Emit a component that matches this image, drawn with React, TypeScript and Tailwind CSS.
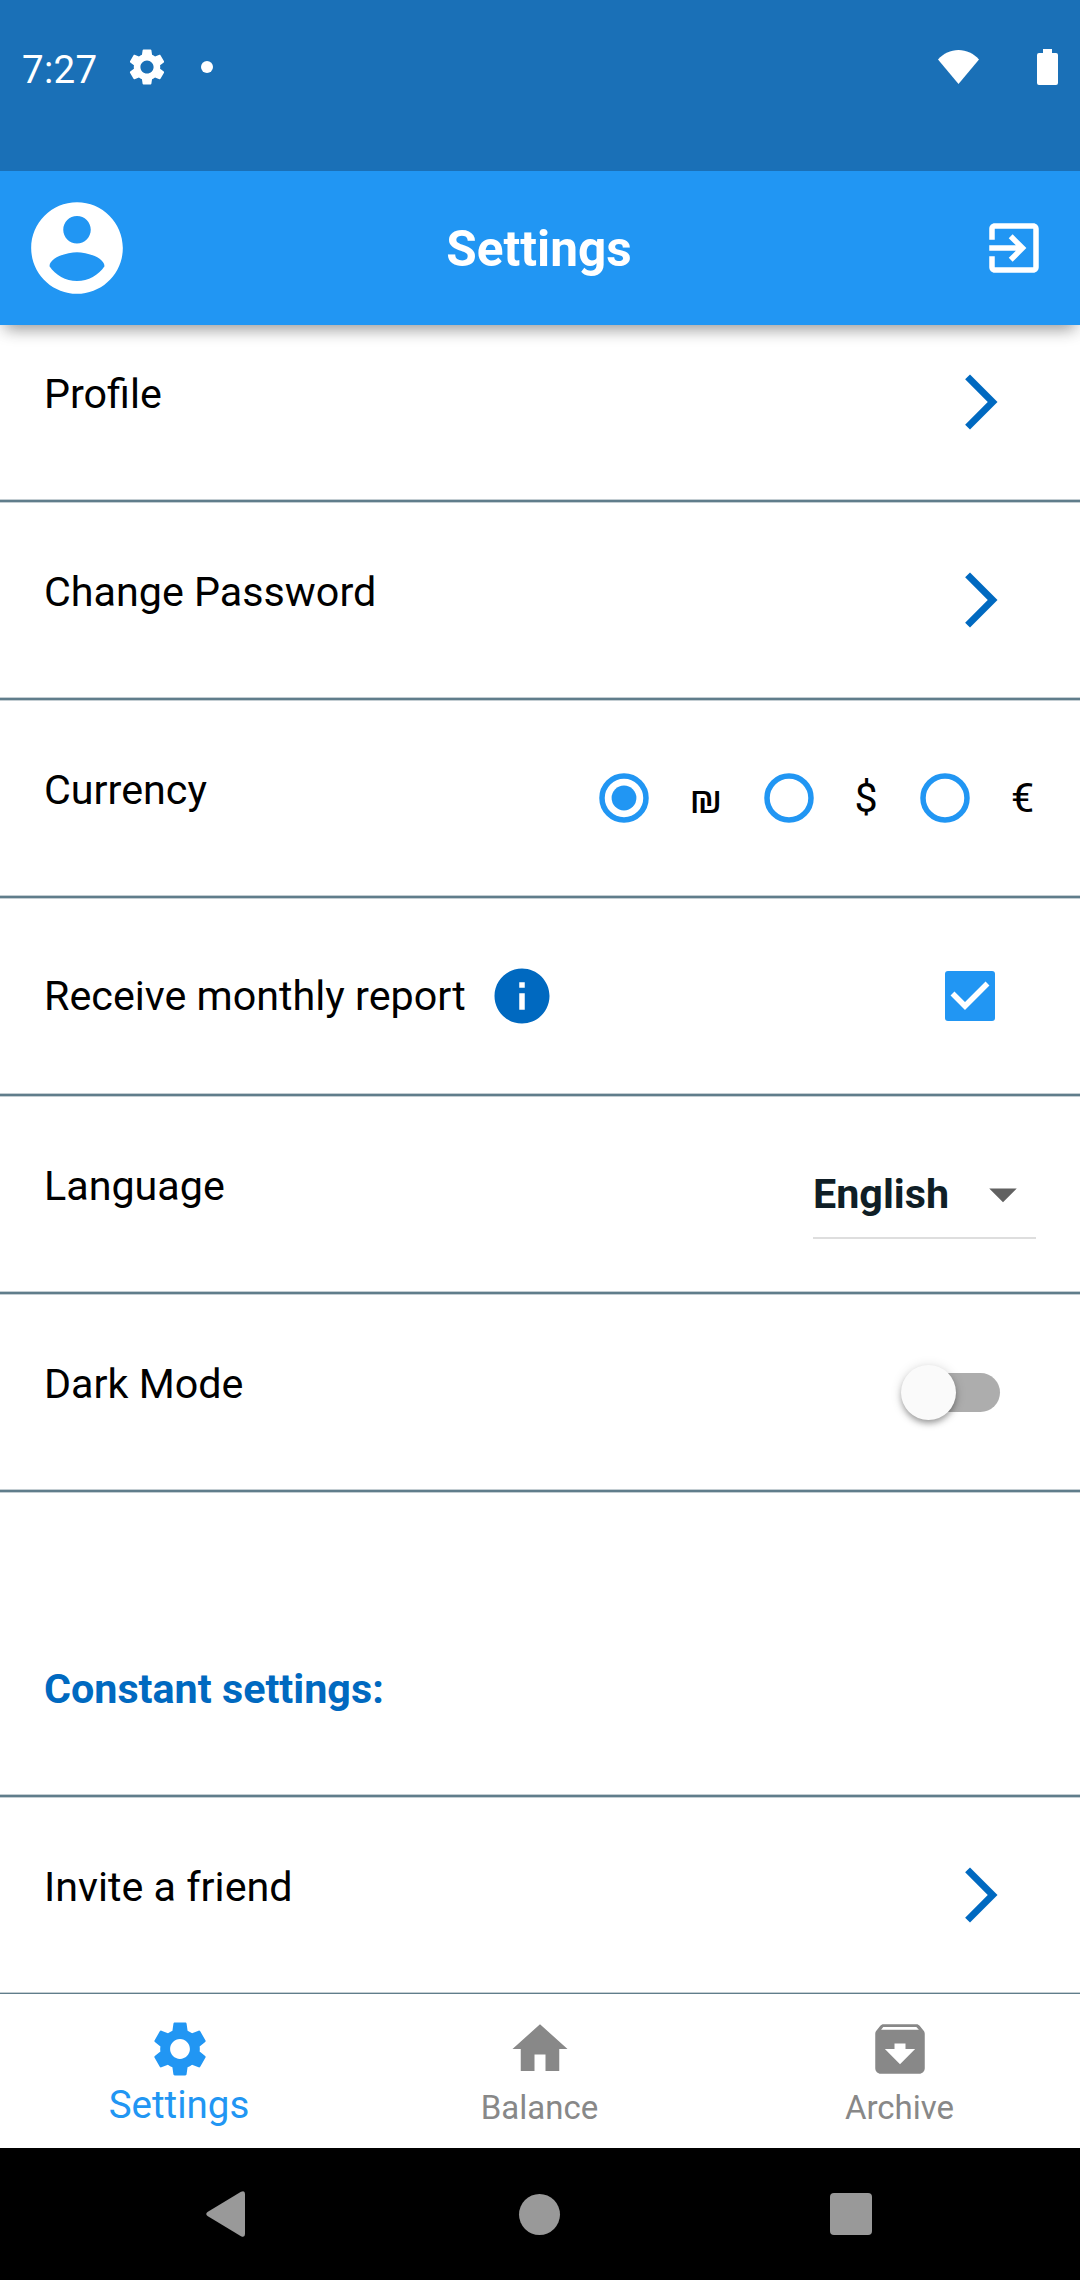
import type { ReactNode } from "react";

const PATHS = {
  settings:
    "M19.14,12.94c0.04-0.3,0.06-0.61,0.06-0.94c0-0.32-0.02-0.64-0.07-0.94l2.03-1.58c0.18-0.14,0.23-0.41,0.12-0.61l-1.92-3.32c-0.12-0.22-0.37-0.29-0.59-0.22l-2.39,0.96c-0.5-0.38-1.03-0.7-1.62-0.94L14.4,2.81c-0.04-0.24-0.24-0.41-0.48-0.41h-3.84c-0.24,0-0.43,0.17-0.47,0.41L9.25,5.35C8.66,5.59,8.12,5.92,7.63,6.29L5.24,5.33c-0.22-0.08-0.47,0-0.59,0.22L2.74,8.87C2.62,9.08,2.66,9.34,2.86,9.48l2.03,1.58C4.84,11.36,4.8,11.69,4.8,12s0.02,0.64,0.07,0.94l-2.03,1.58c-0.18,0.14-0.23,0.41-0.12,0.61l1.92,3.32c0.12,0.22,0.37,0.29,0.59,0.22l2.39-0.96c0.5,0.38,1.03,0.7,1.62,0.94l0.36,2.54c0.05,0.24,0.24,0.41,0.48,0.41h3.84c0.24,0,0.44-0.17,0.47-0.41l0.36-2.54c0.59-0.24,1.13-0.56,1.62-0.94l2.39,0.96c0.22,0.08,0.47,0,0.59-0.22l1.92-3.32c0.12-0.22,0.07-0.47-0.12-0.61L19.14,12.94z M12,15.6c-1.98,0-3.6-1.62-3.6-3.6s1.62-3.6,3.6-3.6s3.6,1.62,3.6,3.6S13.98,15.6,12,15.6z",
  account:
    "M12 2C6.48 2 2 6.48 2 12s4.48 10 10 10 10-4.48 10-10S17.52 2 12 2zm0 3c1.66 0 3 1.34 3 3s-1.34 3-3 3-3-1.34-3-3 1.34-3 3-3zm0 14.2c-2.5 0-4.71-1.28-6-3.22.03-1.99 4-3.08 6-3.08 1.99 0 5.97 1.09 6 3.08-1.29 1.94-3.5 3.22-6 3.22z",
  exit: "M10.09 15.59 11.5 17l5-5-5-5-1.41 1.41L12.67 11H3v2h9.67zM19 3H5c-1.11 0-2 .9-2 2v4h2V5h14v14H5v-4H3v4c0 1.1.89 2 2 2h14c1.1 0 2-.9 2-2V5c0-1.1-.9-2-2-2z",
  chevron: "M6.23 20.23 8 22l10-10L8 2 6.23 3.77 14.46 12z",
  info: "M12 2C6.48 2 2 6.48 2 12s4.48 10 10 10 10-4.48 10-10S17.52 2 12 2zm1 15h-2v-6h2v6zm0-8h-2V7h2v2z",
  dropdown: "M7 10l5 5 5-5z",
  home: "M10 20v-6h4v6h5v-8h3L12 3 2 12h3v8z",
  archive:
    "M20.54 5.23l-1.39-1.68C18.88 3.21 18.47 3 18 3H6c-.47 0-.88.21-1.16.55L3.46 5.23C3.17 5.57 3 6.02 3 6.5V19c0 1.1.9 2 2 2h14c1.1 0 2-.9 2-2V6.5c0-.48-.17-.93-.46-1.27zM12 17.5L6.5 12H10v-2h4v2h3.5L12 17.5zM5.12 5l.81-1h12l.94 1H5.12z",
};

function Icon({ name, className }: { name: keyof typeof PATHS; className: string }) {
  return (
    <svg viewBox="0 0 24 24" fill="currentColor" className={`shrink-0 ${className}`}>
      <path d={PATHS[name]} />
    </svg>
  );
}

function Divider() {
  return <div className="h-1 shrink-0 border-y border-[#c4ced3] bg-[#607d8b]" />;
}

function Row({ label, children }: { label: string; children?: ReactNode }) {
  return (
    <>
      <div className="flex h-[194px] shrink-0 items-center justify-between px-11">
        <span className="pb-4">{label}</span>
        {children}
      </div>
      <Divider />
    </>
  );
}

function Chevron() {
  return <Icon name="chevron" className="mr-[22px] size-[66px] text-[#0069c0]" />;
}

function Radio({ checked }: { checked?: boolean }) {
  return (
    <span className="flex w-[132px] justify-center">
      <svg viewBox="0 0 50 50" className="size-[50px] text-[#2196f3]">
        <circle cx="25" cy="25" r="22" fill="none" stroke="currentColor" strokeWidth="5.5" />
        {checked && <circle cx="25" cy="25" r="12.4" fill="currentColor" />}
      </svg>
    </span>
  );
}

function StatusBar() {
  return (
    <div className="z-20 h-[171px] shrink-0 bg-[#1a70b7] text-white">
      <div className="flex h-[134px] items-center pl-[22px] pr-[22px]">
        <span className="w-[102.5px] pt-[6px] text-[38.5px] leading-[46px] tracking-[0.3px]">7:27</span>
        <Icon name="settings" className="size-[44px]" />
        <span className="ml-[32.5px] size-3 rounded-full bg-white" />
        <svg viewBox="0 0 41 34" className="ml-auto h-[34px] w-[41px]" fill="white">
          <path d="M0 9.5C5.5 3.5 12.500 0 20.500 0S35.500 3.500 41 9.500L20.500 34z" />
        </svg>
        <svg viewBox="0 0 21 36" className="ml-[58px] h-[36px] w-[21px]" fill="white">
          <path d="M6 0h9v4h4a2 2 0 0 1 2 2v28a2 2 0 0 1-2 2H2a2 2 0 0 1-2-2V6a2 2 0 0 1 2-2h4z" />
        </svg>
      </div>
    </div>
  );
}

function AppBar() {
  return (
    <header className="z-10 grid h-[154px] shrink-0 grid-cols-[1fr_auto_1fr] items-center bg-[#2196f3] pl-[22px] pr-[33px] text-white shadow-[0_11px_14px_-7px_rgba(0,0,0,0.3),0_4px_18px_rgba(0,0,0,0.14)]">
      <Icon name="account" className="size-[110px]" />
      <h1 className="pl-[9px] pt-[2px] text-[49.5px] font-bold leading-[58px]">Settings</h1>
      <Icon name="exit" className="size-[66px] justify-self-end" />
    </header>
  );
}

function NavTab({ icon, label, active }: { icon: keyof typeof PATHS; label: string; active?: boolean }) {
  return (
    <div className={`flex flex-1 flex-col items-center pt-[22px] ${active ? "text-[#2196f3]" : "text-[#888888]"}`}>
      <Icon name={icon} className="size-[66px]" />
      <span className={active ? "pr-[2px] text-[38.5px] leading-[46px]" : "pr-[1px] text-[33px] leading-[51px]"}>
        {label}
      </span>
    </div>
  );
}

export default function App() {
  return (
    <div className="flex h-[2280px] w-[1080px] flex-col overflow-hidden bg-white font-['Roboto',sans-serif] text-[41.25px] leading-[48px] text-black">
      <StatusBar />
      <AppBar />

      <main className="flex h-[1669px] shrink-0 flex-col overflow-hidden">
        <div className="-mt-5 flex flex-col">
          <Row label="Profile">
            <Chevron />
          </Row>
          <Row label="Change Password">
            <Chevron />
          </Row>
          <Row label="Currency">
            <div className="flex items-center">
              <Radio checked />
              <span className="w-[33px] pt-[1px] text-center">₪</span>
              <Radio />
              <span className="w-[24.5px]">$</span>
              <Radio />
              <span className="w-[25px]">€</span>
            </div>
          </Row>

          <div className="flex h-[194px] items-center px-11">
            <span>Receive monthly report</span>
            <Icon name="info" className="ml-[23.5px] size-[66px] text-[#0069c0]" />
            <span className="ml-auto mr-[41px] size-[50px] rounded-[3px] bg-[#2196f3]">
              <svg viewBox="0 0 18 18" className="size-full" fill="none" stroke="white" strokeWidth="2">
                <path d="M2.700 8.100 7.200 12.600 15.300 4.500" />
              </svg>
            </span>
          </div>
          <Divider />

          <Row label="Language">
            <div className="flex h-[90px] w-[223px] items-center justify-between border-b-2 border-[#dedede] pt-[2px] font-bold text-[#0f1e26]">
              English
              <Icon name="dropdown" className="size-[66px] text-[#616161]" />
            </div>
          </Row>
          <Row label="Dark Mode">
            <div className="mr-9 flex h-[39px] w-[91px] items-center rounded-full bg-[#adadad]">
              <span className="-ml-2 size-[55px] shrink-0 rounded-full bg-[#fafafa] shadow-[0_4px_6px_-1px_rgba(0,0,0,0.35),0_1px_12px_rgba(0,0,0,0.14)]" />
            </div>
          </Row>

          <div className="mt-[107px] flex h-[194px] items-center px-11 pb-4 font-bold text-[#0069c0]">
            Constant settings:
          </div>
          <Divider />
          <Row label="Invite a friend">
            <Chevron />
          </Row>
        </div>
      </main>

      <nav className="flex h-[154px] shrink-0 bg-white">
        <NavTab icon="settings" label="Settings" active />
        <NavTab icon="home" label="Balance" />
        <NavTab icon="archive" label="Archive" />
      </nav>

      <div className="flex h-[132px] shrink-0 items-center justify-between bg-black pl-[206px] pr-[208px]">
        <svg viewBox="0 0 39 46" className="h-[46px] w-[39px]" fill="#999999">
          <path d="M35 .800Q39-1 39 3V43Q39 47 35 45.200L1.500 25Q-1 23 1.500 21z" />
        </svg>
        <span className="ml-[3px] size-[41px] rounded-full bg-[#999999]" />
        <span className="size-[42px] rounded-[4px] bg-[#999999]" />
      </div>
    </div>
  );
}
